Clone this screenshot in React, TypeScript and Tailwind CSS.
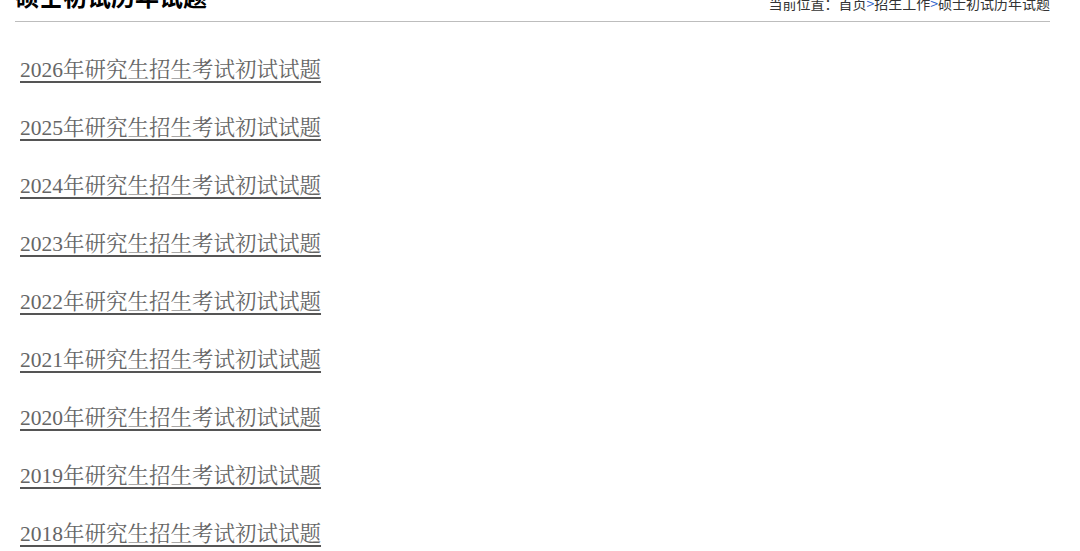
export default function App() {
  const years = [2026, 2025, 2024, 2023, 2022, 2021, 2020, 2019, 2018];
  return (
    <div className="h-[551px] overflow-hidden bg-white">
      <div className="ml-[15px] w-[1035px]">
        <div className="-mt-[20px] flex items-end justify-between border-b border-[#bdbdbd] pb-[9px]">
          <h2
            className="text-[24px] font-bold leading-[32px] text-black"
            style={{ fontFamily: '"Noto Sans CJK SC", sans-serif' }}
          >
            硕士初试历年试题
          </h2>
          <div
            className="mb-[-1px] text-[14px] leading-[20px] text-[#333]"
            style={{ fontFamily: '"Noto Sans CJK SC", sans-serif' }}
          >
            当前位置：首页<span className="text-[#2b62c9]">&gt;</span>招生工作
            <span className="text-[#2b62c9]">&gt;</span>硕士初试历年试题
          </div>
        </div>
        <ul className="pt-[19px]">
          {years.map((y) => (
            <li key={y} className="flex h-[58px] items-center pl-[5px]">
              <a
                href="#"
                className="text-[21.5px] leading-[58px] text-[#666] underline decoration-[#555] decoration-2 underline-offset-[4px]"
                style={{
                  fontFamily:
                    '"Liberation Serif", "Noto Serif CJK SC", "Noto Sans CJK SC", serif',
                }}
              >
                {y}年研究生招生考试初试试题
              </a>
            </li>
          ))}
        </ul>
      </div>
    </div>
  );
}
